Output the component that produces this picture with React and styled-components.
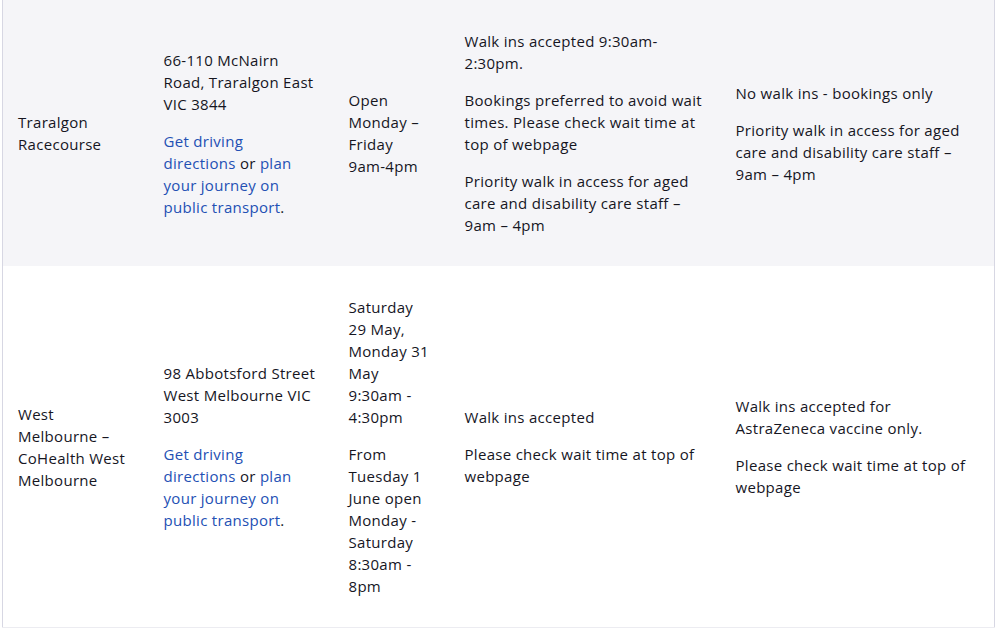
import React from 'react';
import styled, { createGlobalStyle } from 'styled-components';

const Global = createGlobalStyle`
  body {
    margin: 0;
    background: #ffffff;
    font-family: "Open Sans", "Liberation Sans", sans-serif;
  }
`

const Wrapper = styled.div`
  padding: 0 2px;
`

const Table = styled.table`
  width: 993px;
  border-collapse: collapse;
  table-layout: fixed;
  border-left: 1px solid #d7d7e3;
  border-right: 1px solid #d7d7e3;
  border-bottom: 1px solid #ececf1;
`

const Row = styled.tr`
  background-color: ${p => (p.$shaded ? '#f5f5f8' : '#ffffff')};
`

const Cell = styled.td`
  padding: 30px 16px 30px 15px;
  vertical-align: middle;
  font-size: 15px;
  line-height: 22px;
  letter-spacing: 0.3px;
  color: #16161f;
`

const Para = styled.p`
  margin: 0;
  & + & {
    margin-top: 15px;
  }
`

const Link = styled.a`
  color: #2350b4;
  text-decoration: none;
`

const Directions = () => (
  <Para>
    <Link href="#">Get driving directions</Link> or <Link href="#">plan your journey on public transport</Link>.
  </Para>
)

const rows = [
  {
    shaded: true,
    name: ['Traralgon Racecourse'],
    address: '66-110 McNairn Road, Traralgon East VIC 3844',
    hours: ['Open Monday – Friday 9am-4pm'],
    walkIns: [
      'Walk ins accepted 9:30am-2:30pm.',
      'Bookings preferred to avoid wait times. Please check wait time at top of webpage',
      'Priority walk in access for aged care and disability care staff – 9am – 4pm',
    ],
    notes: [
      'No walk ins - bookings only',
      'Priority walk in access for aged care and disability care staff – 9am – 4pm',
    ],
  },
  {
    shaded: false,
    name: ['West Melbourne – CoHealth West Melbourne'],
    address: '98 Abbotsford Street West Melbourne VIC 3003',
    hours: [
      'Saturday 29 May, Monday 31 May 9:30am - 4:30pm',
      'From Tuesday 1 June open Monday - Saturday 8:30am - 8pm',
    ],
    walkIns: ['Walk ins accepted', 'Please check wait time at top of webpage'],
    notes: ['Walk ins accepted for AstraZeneca vaccine only.', 'Please check wait time at top of webpage'],
  },
]

const App = () => {
  return (
    <>
      <Global />
      <Wrapper>
        <Table>
          <colgroup>
            <col style={{ width: 146 }} />
            <col style={{ width: 185 }} />
            <col style={{ width: 116 }} />
            <col style={{ width: 271 }} />
            <col />
          </colgroup>
          <tbody>
            {rows.map((r, i) => (
              <Row key={i} $shaded={r.shaded}>
                <Cell>{r.name.map((t, j) => <Para key={j}>{t}</Para>)}</Cell>
                <Cell>
                  <Para>{r.address}</Para>
                  <Directions />
                </Cell>
                <Cell>{r.hours.map((t, j) => <Para key={j}>{t}</Para>)}</Cell>
                <Cell>{r.walkIns.map((t, j) => <Para key={j}>{t}</Para>)}</Cell>
                <Cell>{r.notes.map((t, j) => <Para key={j}>{t}</Para>)}</Cell>
              </Row>
            ))}
          </tbody>
        </Table>
      </Wrapper>
    </>
  );
};

export default App;
